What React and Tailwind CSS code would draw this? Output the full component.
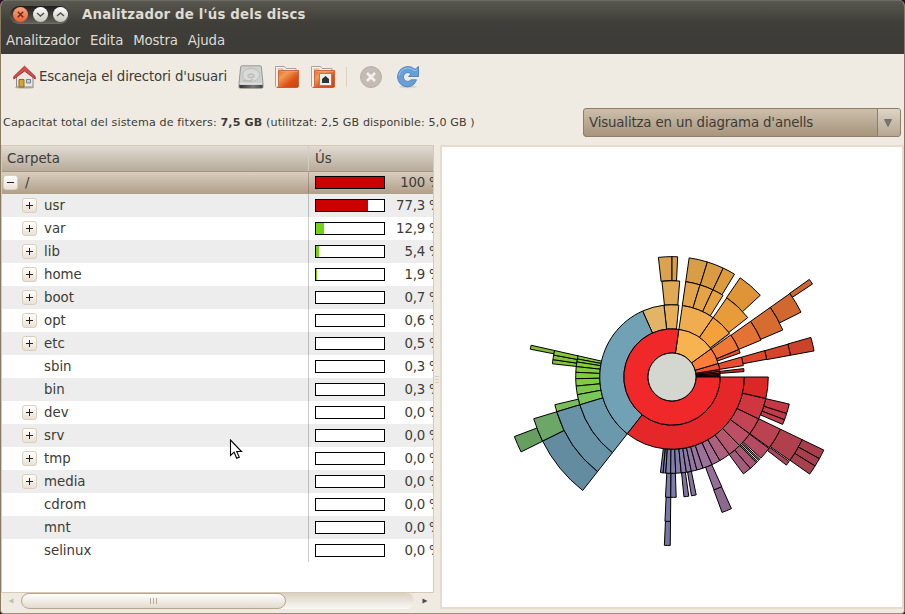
import React from "react";

// [ring, start angle, end angle, fill] - angles in degrees, clockwise from east
const SEGMENTS = [
  [6, 324.6, 326.5, "#cb672e"],
  [5, 324.7, 333.3, "#d0682f"],
  [4, 324.7, 337, "#d66c30"],
  [3, 324.7, 337.5, "#e47234"],
  [5, 344.1, 349.6, "#cd4329"],
  [4, 344.2, 349.6, "#d6452a"],
  [3, 344.1, 349.4, "#df492b"],
  [4, 263.5, 270, "#dba250"],
  [4, 270, 272.7, "#d79d48"],
  [3, 264, 274.6, "#dfa955"],
  [4, 278.2, 287.1, "#d89e47"],
  [4, 287.1, 295.2, "#da9c42"],
  [4, 295.2, 301.3, "#dc9b3d"],
  [3, 278.2, 286.9, "#e2a549"],
  [3, 286.9, 295.1, "#e4a344"],
  [3, 295.1, 302, "#e6a23f"],
  [4, 304.5, 317.2, "#de9437"],
  [3, 304.7, 321.9, "#e89b39"],
  [5, 191.1, 192.7, "#84bc35"],
  [4, 186.3, 188.3, "#85c43a"],
  [4, 188.3, 190.5, "#85c438"],
  [4, 190.5, 192.7, "#86c637"],
  [3, 190.8, 192.7, "#87cd37"],
  [3, 189, 190.8, "#86cd37"],
  [3, 186.2, 189, "#84ce38"],
  [3, 182.8, 186.2, "#82ce39"],
  [3, 179, 182.8, "#80cd3a"],
  [3, 174.6, 179, "#7fcc40"],
  [3, 169.4, 174.6, "#7cc94a"],
  [3, 163.2, 169.4, "#7ac656"],
  [4, 163.2, 166.7, "#79be56"],
  [6, 153.6, 159.3, "#669f60"],
  [5, 153.6, 163.2, "#6ca768"],
  [5, 128.2, 153.6, "#638ca0"],
  [4, 128.2, 163.2, "#6892a6"],
  [3, 128.2, 163.2, "#6b99ac"],
  [6, 25.7, 29, "#a83d4b"],
  [6, 29, 31.9, "#a83f4e"],
  [6, 31.9, 35.2, "#a8414f"],
  [5, 25.7, 35.3, "#b1404e"],
  [5, 35.8, 37.6, "#ab4559"],
  [4, 25.7, 36, "#bb4250"],
  [4, 13, 17.7, "#c53844"],
  [4, 17.7, 20.8, "#c43a48"],
  [4, 20.8, 23.2, "#c33c4b"],
  [4, 36.4, 42.4, "#b44b63"],
  [4, 43.1, 43.9, "#af4f6a"],
  [4, 44.6, 45.4, "#ad526d"],
  [4, 45.4, 49.4, "#ab5773"],
  [4, 49.4, 53.6, "#a55b7b"],
  [5, 65.7, 69.7, "#8d688f"],
  [4, 65.6, 69.6, "#946f98"],
  [4, 78.4, 80.7, "#84739f"],
  [4, 82, 84.3, "#8073a0"],
  [6, 90.6, 92.6, "#7475a0"],
  [5, 90.6, 92.8, "#7779a4"],
  [4, 90.6, 93.1, "#7b7ca8"],
  [4, 88, 90.6, "#7e7ba9"],
  [3, 95.3, 96.9, "#777daa"],
  [3, 93.7, 95.3, "#797eac"],
  [3, 90.8, 93.7, "#7c7fad"],
  [3, 87.8, 90.8, "#807ead"],
  [3, 84.5, 87.8, "#847daa"],
  [3, 81.4, 84.5, "#877ba9"],
  [3, 78.4, 81.4, "#8b7aa6"],
  [3, 75, 78.4, "#9078a3"],
  [3, 71.2, 75, "#9676a0"],
  [3, 65.4, 71.2, "#9d719a"],
  [3, 60.2, 65.4, "#a56b8e"],
  [3, 53.4, 60.2, "#ad617f"],
  [3, 45.4, 53.4, "#b5566e"],
  [3, 36.1, 45.4, "#bd4e66"],
  [3, 25.8, 36.1, "#c34455"],
  [3, 12.9, 25.8, "#d0363f"],
  [3, 0, 12.9, "#dc2727"],
  [2, 353.3, 355.7, "#d72b29"],
  [2, 344, 350.9, "#ea4d2d"],
  [2, 337.6, 340.6, "#e4512c"],
  [2, 324.4, 337.6, "#f07836"],
  [2, 304.6, 322.7, "#f4a13c"],
  [2, 278.3, 304.6, "#efac51"],
  [2, 263.6, 275.4, "#e6ae59"],
  [2, 246, 263.6, "#e1b467"],
  [2, 128.2, 246, "#71a1b5"],
  [2, 0, 128.2, "#e62729"],
  [1, 358.5, 360, "#d12b2a"],
  [1, 357, 358.5, "#d82b29"],
  [1, 355.2, 357, "#df302a"],
  [1, 353.2, 355.2, "#e4342b"],
  [1, 351, 353.2, "#ed3d2c"],
  [1, 343.7, 351, "#f3532f"],
  [1, 324.1, 343.7, "#fb7d3a"],
  [1, 278.2, 324.1, "#f7b350"],
  [1, 0, 278.2, "#f12829"],
];

function arc(ring, a, b) {
  const r0 = ring * 24.07;
  const r1 = r0 + 24.07;
  const pt = (r, d) => {
    const t = (d * Math.PI) / 180;
    return `${(r * Math.cos(t)).toFixed(2)} ${(r * Math.sin(t)).toFixed(2)}`;
  };
  const big = b - a > 180 ? 1 : 0;
  return `M${pt(r0, a)}L${pt(r1, a)}A${r1} ${r1} 0 ${big} 1 ${pt(r1, b)}L${pt(r0, b)}A${r0} ${r0} 0 ${big} 0 ${pt(r0, a)}Z`;
}

function RingsChart() {
  return (
    <svg width="460" height="460" viewBox="-230 -230 460 460" className="block">
      {SEGMENTS.map(([ring, a, b, fill], i) => (
        <path key={i} d={arc(ring, a, b)} fill={fill} stroke="#000" strokeWidth="1" />
      ))}
      <path d="M38.500 -28.500L58 -43.500" stroke="#000" strokeWidth=".6" />
      <circle r="24" fill="#d3d7cf" stroke="#000" strokeWidth="1" />
    </svg>
  );
}

const ROWS = [
  ["usr", 52, "77,3", true, "#cc0000"],
  ["var", 8, "12,9", true, "#73d216"],
  ["lib", 3, "5,4", true, "#73d216"],
  ["home", 1, "1,9", true, "#73d216"],
  ["boot", 0, "0,7", true],
  ["opt", 0, "0,6", true],
  ["etc", 0, "0,5", true],
  ["sbin", 0, "0,3", false],
  ["bin", 0, "0,3", false],
  ["dev", 0, "0,0", true],
  ["srv", 0, "0,0", true],
  ["tmp", 0, "0,0", true],
  ["media", 0, "0,0", true],
  ["cdrom", 0, "0,0", false],
  ["mnt", 0, "0,0", false],
  ["selinux", 0, "0,0", false],
];

function Expander({ open }) {
  return (
    <span className="flex h-[15px] w-[15px] shrink-0 items-center justify-center rounded-[3px] border border-[#dccfb9] bg-linear-to-b from-white to-[#e9e1d6]">
      <svg width="7" height="7" viewBox="0 0 7 7" shapeRendering="crispEdges">
        <path d={open ? "M0 3h7v1H0z" : "M0 3h7v1H0zM3 0h1v7H3z"} fill="#222" />
      </svg>
    </span>
  );
}

function Usage({ fill, color, value }) {
  return (
    <div className="flex h-full w-[125px] shrink-0 items-center overflow-hidden border-l border-black/20 pl-[6px]">
      <span className="flex h-[13px] w-[70px] shrink-0 border border-black bg-white">
        <span style={{ width: fill, background: color }} />
      </span>
      <span className="w-[40px] shrink-0 text-right tracking-[-0.2px]">{value}</span>
      <span className="shrink-0 pl-[4px]">%</span>
    </div>
  );
}

function FolderIcon({ home }) {
  return (
    <svg width="26" height="24" viewBox="0 0 26 24" className="block">
      <path d="M1.500 1.500h9l1.500 2h10v19H2.500l-1-1z" fill="#f4f3f1" stroke="#a6a39e" />
      <path d="M3.500 4h6" stroke="#f0925c" strokeWidth="1" />
      <path d="M4 6.500h2" stroke="#e8b497" />
      <path d="M4.500 5.500h20V21q0 1.500-1.500 1.500H3.500l1-2z" fill="url(#folder)" stroke="#cd5325" strokeWidth=".8" />
      <path d="M5.500 6.500h18" stroke="#f7a36b" opacity=".6" />
      {home && (
        <>
          <path d="M9.500 8.500h12v12h-12z" fill="#eeeeec" stroke="#8b8781" />
          <path d="M15.500 11l3.500 3v4h-7v-4z" fill="#2e3436" />
        </>
      )}
    </svg>
  );
}

function HomeIcon() {
  return (
    <svg width="24" height="24" viewBox="0 0 24 24" className="block">
      <ellipse cx="12.500" cy="22.600" rx="10" ry="1.200" fill="#000" opacity=".2" />
      <path d="M4.500 11L12.500 4l8.500 7v11h-16.500z" fill="#e9e7e4" stroke="#8d8984" />
      <path d="M7 14.500h5v7.500H7z" fill="#d7a13a" stroke="#8f6a1c" />
      <path d="M14.500 14.500h4v3.500h-4z" fill="#b9d2dc" stroke="#73838a" />
      <path d="M12.500 1.200L1.800 11.500v2.500L12.500 6l10.700 8v-2.500z" fill="#d54f4f" stroke="#a12525" strokeWidth=".9" strokeLinejoin="round" />
    </svg>
  );
}

function DriveIcon() {
  return (
    <svg width="26" height="24" viewBox="0 0 26 24" className="block">
      <path d="M4 .8h18q1.200 0 1.400 1.300L25 18.500V22q0 1.300-1.300 1.300H2.300Q1 23.300 1 22v-3.500L2.600 2.100Q2.800.8 4 .8z" fill="#cfcfcd" stroke="#8f8f8d" strokeWidth=".9" />
      <path d="M1.300 19.700h23.400V22q0 1-1 1H2.300q-1 0-1-1z" fill="url(#drv)" />
      <path d="M2 19h22" stroke="#f0f0f0" />
      <ellipse cx="13" cy="10" rx="8.500" ry="6.500" fill="#dadad8" stroke="#bdbdbb" />
      <ellipse cx="13" cy="10.800" rx="3.200" ry="2" fill="#cfcfcd" stroke="#b0b0ae" strokeWidth=".8" />
      <path d="M5 15.500q6 1.500 10-1" stroke="#b4b4b2" fill="none" />
    </svg>
  );
}

function StopIcon() {
  return (
    <svg width="24" height="24" viewBox="0 0 24 24" className="block">
      <circle cx="12" cy="12" r="10.500" fill="#c2bcb5" stroke="#b5afa8" />
      <path d="M8 8l8 8M16 8l-8 8" stroke="#f4f0ea" strokeWidth="2.600" />
    </svg>
  );
}

function RefreshIcon() {
  return (
    <svg width="24" height="24" viewBox="0 0 24 24" className="block">
      <ellipse cx="12" cy="21.800" rx="9" ry="1.500" fill="#000" opacity=".1" />
      <path d="M20.500 14.800H15q-1.600 2-4.200 1.600Q7.600 15.600 7.300 12q.2-3.600 3.700-4.500 2.300-.3 4 1.500l-2.500 2.500H22.500V1.500L19 4.300Q15.500 1 10.500 1.600 2 3.500 1.500 12q.8 8.700 9.500 9.900 7-.1 9.500-7.100z" fill="#699fd6" stroke="#4882c0" strokeWidth=".9" strokeLinejoin="round" />
      <path d="M3 10.500Q4.500 4 11 3q4.500-.3 8 3l2-1.800" fill="none" stroke="#9ac3ea" />
    </svg>
  );
}

function WindowButton({ close, children }) {
  return (
    <span className={close ? "flex h-[15px] w-[15px] items-center justify-center rounded-full bg-linear-to-b from-[#f6a57f] to-[#ee5c2b]" : "flex h-[15px] w-[15px] items-center justify-center rounded-full bg-linear-to-b from-white to-[#c9c5bd]"}>
      <svg width="9" height="9" viewBox="0 0 9 9" fill="none" stroke={close ? "#5b2e20" : "#55534e"} strokeWidth="1.500">
        {children}
      </svg>
    </span>
  );
}

export default function App() {
  return (
    <div className="h-[614px] w-[905px] overflow-hidden bg-[#2a0d24] font-['DejaVu_Sans',sans-serif] text-[13.33px] leading-none text-[#3c3b37]">
      <svg width="0" height="0" className="absolute">
        <defs>
          <linearGradient id="folder" x1="0" y1="0" x2="1" y2="1">
            <stop offset="0" stopColor="#e5682b" />
            <stop offset=".3" stopColor="#f19b53" />
            <stop offset=".65" stopColor="#dd4f15" />
            <stop offset="1" stopColor="#c94012" />
          </linearGradient>
          <linearGradient id="drv" x1="0" y1="0" x2="1" y2="0">
            <stop offset="0" stopColor="#333" />
            <stop offset=".6" stopColor="#777" />
            <stop offset="1" stopColor="#444" />
          </linearGradient>
        </defs>
      </svg>
      <div className="flex h-full flex-col overflow-hidden rounded-t-[6px] rounded-b-[4px] border-x border-b border-x-[#8b7a62] border-b-[#99906f] bg-[#efebe3]">
        <header className="flex h-[54px] shrink-0 flex-col border-t border-[#6b6a63] bg-linear-to-b from-[#59584f] via-[#3f3e39] via-40% to-[#3c3b37] text-[#dfdbd2]">
          <div className="flex h-[27px] items-center pl-[9px]">
            <div className="flex h-[18px] w-[59px] items-center gap-[5px] rounded-full border-b border-[#6d6c66] bg-linear-to-b from-[#1f1e1b] to-[#62615a] pl-[3px]">
              <WindowButton close><path d="M1.800 1.800l5.400 5.400M7.200 1.800L1.800 7.200" /></WindowButton>
              <WindowButton><path d="M1 3l3.500 3L8 3" /></WindowButton>
              <WindowButton><path d="M1 6l3.500-3L8 6" /></WindowButton>
            </div>
            <h1 className="pl-[13px] font-bold tracking-[0.17px] whitespace-nowrap">Analitzador de l'ús dels discs</h1>
          </div>
          <nav className="flex h-[25px] items-center gap-[10px] pl-[5px] tracking-[-0.15px]">
            <span>Analitzador</span>
            <span>Edita</span>
            <span>Mostra</span>
            <span>Ajuda</span>
          </nav>
        </header>

        <div className="flex h-[46px] shrink-0 items-center pl-[11px]">
          <HomeIcon />
          <span className="w-[198px] pl-[3px] tracking-[-0.16px] whitespace-nowrap">Escaneja el directori d'usuari</span>
          <span className="pl-[4px]"><DriveIcon /></span>
          <span className="pl-[10px]"><FolderIcon /></span>
          <span className="pl-[10px]"><FolderIcon home /></span>
          <span className="ml-[10px] h-[20px] w-px bg-[#ddd3c4]" />
          <span className="pl-[12px]"><StopIcon /></span>
          <span className="pl-[13px]"><RefreshIcon /></span>
        </div>

        <div className="flex h-[45px] shrink-0 items-center justify-between pl-[2px] pr-[3px]">
          <p className="text-[11.1px] tracking-[0.13px] whitespace-nowrap">
            Capacitat total del sistema de fitxers: <b>7,5 GB</b> (utilitzat: 2,5 GB disponible: 5,0 GB )
          </p>
          <button className="flex h-[29px] w-[318px] items-stretch overflow-hidden rounded-[3px] border border-[#8d7d69] bg-linear-to-b from-[#cdbfac] to-[#a7957c]">
            <span className="flex flex-1 items-center border-r border-[#8d7d69] pl-[5px] tracking-[-0.15px]">Visualitza en un diagrama d'anells</span>
            <span className="flex w-[22px] items-center justify-center bg-linear-to-b from-[#ddd5c8] to-[#b5a792] pr-[3px]">
              <svg width="8" height="8" viewBox="0 0 8 8"><path d="M.5 .5h7L4 7.500z" fill="#7c766c" stroke="#6a655c" strokeWidth=".8" /></svg>
            </span>
          </button>
        </div>

        <main className="flex h-[468px] shrink-0">
          <section className="flex w-[433px] shrink-0 flex-col">
            <div className="flex h-[448px] shrink-0 flex-col border border-[#d6cab6] bg-white">
              <div className="flex h-[26px] shrink-0 items-center border-b border-[#a49581] bg-linear-to-b from-[#e1dbd3] to-[#b7ab9a]">
                <span className="w-[306px] pl-[5px]">Carpeta</span>
                <span className="flex h-full flex-1 items-center border-l border-[#d5ccbf] pl-[6px]">Ús</span>
              </div>
              <div className="flex h-[22px] shrink-0 items-center overflow-hidden bg-linear-to-b from-[#d9cebf] to-[#b09f89] pb-[1px]">
                <div className="flex w-[306px] shrink-0 items-center pl-[1px]">
                  <Expander open />
                  <span className="pl-[7px]">/</span>
                </div>
                <Usage fill={68} color="#cc0000" value="100" />
              </div>
              {ROWS.map(([name, fill, value, expandable, color], i) => (
                <div key={name} className={i % 2 ? "flex h-[23px] shrink-0 items-center overflow-hidden bg-white" : "flex h-[23px] shrink-0 items-center overflow-hidden bg-[#ededed]"}>
                  <div className="flex w-[306px] shrink-0 items-center pl-[20px]">
                    {expandable ? <Expander /> : <span className="w-[15px]" />}
                    <span className="pl-[7px]">{name}</span>
                  </div>
                  <Usage fill={fill} color={color} value={value} />
                </div>
              ))}
            </div>
            <div className="flex h-[16px] shrink-0 items-center">
              <span className="flex w-[20px] justify-center">
                <svg width="6" height="6" viewBox="0 0 6 6"><path d="M5.500 .5v5L.5 3z" fill="#c5b9a5" /></svg>
              </span>
              <div className="flex h-[16px] w-[393px] rounded-[8px] bg-linear-to-b from-[#d9d0c2] to-[#fbf9f6]">
                <div className="flex h-[16px] w-[265px] items-center justify-center gap-[2px] rounded-[8px] border border-[#b7a78e] bg-linear-to-b from-white to-[#e2dacd]">
                  <i className="h-[6px] w-px bg-[#b9ac97]" />
                  <i className="h-[6px] w-px bg-[#b9ac97]" />
                  <i className="h-[6px] w-px bg-[#b9ac97]" />
                </div>
              </div>
              <span className="flex flex-1 justify-center pl-[2px]">
                <svg width="6" height="6" viewBox="0 0 6 6"><path d="M.5 .5v5l5-2.500z" fill="#4b4a45" /></svg>
              </span>
            </div>
          </section>

          <div className="flex w-[6px] shrink-0 flex-col items-center justify-center gap-[2px]">
            <i className="h-px w-[4px] bg-[#d6cdb8]" />
            <i className="h-px w-[4px] bg-[#d6cdb8]" />
            <i className="h-px w-[4px] bg-[#d6cdb8]" />
          </div>

          <section className="h-[464px] w-[464px] shrink-0 border-2 border-[#e5dccb] bg-white">
            <RingsChart />
          </section>
        </main>
      </div>

      <svg width="14" height="22" viewBox="0 0 14 22" className="absolute top-[439px] left-[229px]">
        <path d="M1.500 1v15.500l3.600-3.300 2.600 6 2.600-1.100-2.600-5.600h4.800z" fill="#fff" stroke="#000" strokeWidth="1.100" />
      </svg>
    </div>
  );
}
